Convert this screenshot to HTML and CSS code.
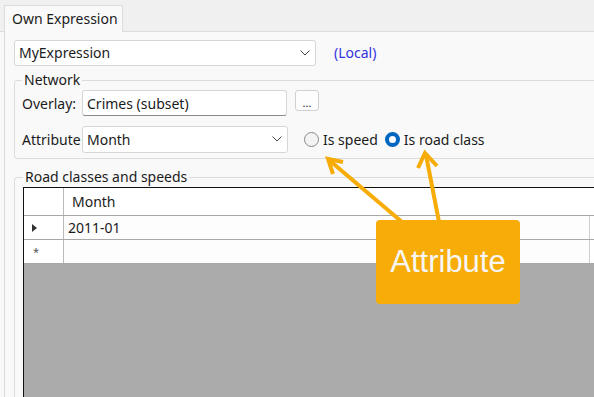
FILE: index.html
```html
<!DOCTYPE html>
<html lang="en">
<head>
    <meta charset="UTF-8">
    <title>Own Expression</title>
    <link rel="stylesheet" href="styles.css">
</head>
<body>
<!-- Tab strip -->
<div class="tabs">
    <div class="tab">Own Expression</div>
</div>

<!-- Tab page -->
<div class="panel">
    <div class="expr-row">
        <div class="combo combo-expr">
            <span>MyExpression</span>
            <svg class="chev" width="10" height="6" viewBox="0 0 10 6"><polyline points="0.5,0.5 5,5 9.5,0.5" fill="none" stroke="#444" stroke-width="1"/></svg>
        </div>
        <span class="local">(Local)</span>
    </div>

    <fieldset class="group group-network">
        <legend>Network</legend>
        <div class="field-row">
            <label class="lbl">Overlay:</label>
            <div class="textbox">Crimes (subset)</div>
            <button class="dots">...</button>
        </div>
        <div class="field-row">
            <label class="lbl">Attribute</label>
            <div class="combo combo-attr">
                <span>Month</span>
                <svg class="chev" width="10" height="6" viewBox="0 0 10 6"><polyline points="0.5,0.5 5,5 9.5,0.5" fill="none" stroke="#444" stroke-width="1"/></svg>
            </div>
            <span class="radio"></span><span class="radio-text">Is speed</span>
            <span class="radio checked"></span><span class="radio-text">Is road class</span>
        </div>
    </fieldset>

    <fieldset class="group group-roads">
        <legend>Road classes and speeds</legend>
        <div class="grid">
            <div class="grid-row head">
                <div class="rowhead"></div>
                <div class="cell">Month</div>
                <div class="rest"></div>
            </div>
            <div class="grid-row">
                <div class="rowhead"><span class="tri"></span></div>
                <div class="cell">2011-01</div>
                <div class="rest"></div>
            </div>
            <div class="grid-row">
                <div class="rowhead"><span class="star">*</span></div>
                <div class="cell"></div>
                <div class="rest"></div>
            </div>
            <div class="grid-empty"></div>
        </div>
    </fieldset>
</div>

<!-- Annotation -->
<svg class="arrows" width="594" height="397" viewBox="0 0 594 397">
    <g fill="none" stroke="#f7ac08" stroke-width="4" stroke-linecap="butt" stroke-linejoin="miter">
        <line x1="402" y1="222" x2="329" y2="160"/>
        <polyline points="343,162 328,159 333,174"/>
        <line x1="439" y1="222" x2="426" y2="155"/>
        <polyline points="418,168 425,153 437,166"/>
    </g>
</svg>
<div class="callout">Attribute</div>
</body>
</html>
```

FILE: styles.css
```css
/* General */
body {
    margin: 0;
    width: 594px;
    height: 397px;
    overflow: hidden;
    position: relative;
    font-family: 'Noto Sans', sans-serif;
    font-size: 14px;
    color: #1b1b1b;
    background: #f9f9f9;
}

/* Tabs */
.tabs {
    height: 32px;
    background: #f0f0f0;
    display: flex;
    align-items: flex-end;
    border-bottom: 1px solid #dcdcdc;
    box-sizing: border-box;
}

.tab {
    margin-left: 4px;
    margin-bottom: -1px;
    height: 27px;
    box-sizing: border-box;
    width: 119px;
    padding: 3px 0 0 7px;
    border: 1px solid #dcdcdc;
    border-bottom: none;
    background: #f9f9f9;
}

.panel {
    margin-left: 4px;
    border-left: 1px solid #dcdcdc;
    padding: 7px 0 0 9px;
    height: 365px;
    overflow: hidden;
}

/* Expression row */
.expr-row {
    display: flex;
    align-items: center;
    height: 27px;
}

.combo,
.textbox {
    height: 26px;
    box-sizing: border-box;
    background: #fff;
    border: 1px solid #d6d6d6;
    border-radius: 3px;
    display: flex;
    align-items: center;
    padding-left: 4px;
}

.combo span { flex: 1; }

.chev { margin-right: 5px; }

.combo-expr { width: 302px; }

.local {
    margin-left: 18px;
    color: #3333dd;
}

/* Group boxes */
.group {
    margin: 0 -30px 0 0;
    border: 1px solid #dcdcdc;
    border-radius: 3px;
    padding: 0 0 0 7px;
}

.group legend {
    margin-left: 0;
    padding: 0 2px;
    line-height: 18px;
}

.group-network {
    margin-top: 5px;
    height: 88px;
    box-sizing: border-box;
}

.field-row {
    display: flex;
    align-items: center;
    height: 26px;
    margin-top: 1px;
}

.field-row + .field-row { margin-top: 10px; }

.lbl {
    width: 60px;
}

.textbox {
    width: 205px;
    border-bottom-color: #8a8a8a;
}

.dots {
    margin-left: 8px;
    align-self: flex-start;
    width: 24px;
    height: 21px;
    padding: 4px 0 0;
    font-family: inherit;
    font-size: 11px;
    line-height: 10px;
    background: #fdfdfd;
    border: 1px solid #d0d0d0;
    border-radius: 3px;
    color: #1b1b1b;
}

.combo-attr {
    width: 206px;
    height: 27px;
}

.radio {
    margin-left: 16px;
    width: 15px;
    height: 15px;
    box-sizing: border-box;
    border: 1px solid #8a8a8a;
    border-radius: 50%;
    background: #f3f3f3;
}

.radio.checked {
    margin-left: 7px;
    border: 4px solid #0067c0;
    background: #fff;
}

.radio-text { margin-left: 4px; }

.group-roads {
    margin-top: 9px;
    height: 260px;
    padding-left: 8px;
}

/* Data grid */
.grid {
    margin-top: 1px;
    border-left: 1px solid #111;
    border-top: 1px solid #111;
    height: 240px;
    background: #ababab;
}

.grid-row {
    display: grid;
    grid-template-columns: 40px 526px 1fr;
    height: 23px;
    background: #fff;
    border-bottom: 1px solid #a8a8a8;
}

.grid-row.head { height: 27px; }

.rowhead {
    border-right: 1px solid #bbb;
    background: #fff;
    display: flex;
    align-items: center;
    padding-left: 8px;
}

.cell {
    display: flex;
    align-items: center;
    padding-left: 4px;
    background: #fdfdfd;
    border-right: 1px solid #cfcfcf;
}

.head .cell {
    padding-left: 8px;
    background: #fff;
    border-right: none;
}

.tri {
    width: 0;
    height: 0;
    border-top: 4px solid transparent;
    border-bottom: 4px solid transparent;
    border-left: 5px solid #333;
}

.star {
    font-size: 11px;
    color: #555;
    margin-left: 1px;
}

/* Annotation */
.arrows {
    position: absolute;
    top: 0;
    left: 0;
}

.callout {
    position: absolute;
    left: 376px;
    top: 220px;
    width: 144px;
    height: 84px;
    border-radius: 4px;
    background: #f7ac08;
    color: #f6f6f6;
    font-family: 'Liberation Sans', Arial, sans-serif;
    font-size: 31px;
    display: flex;
    align-items: center;
    justify-content: center;
}
```
